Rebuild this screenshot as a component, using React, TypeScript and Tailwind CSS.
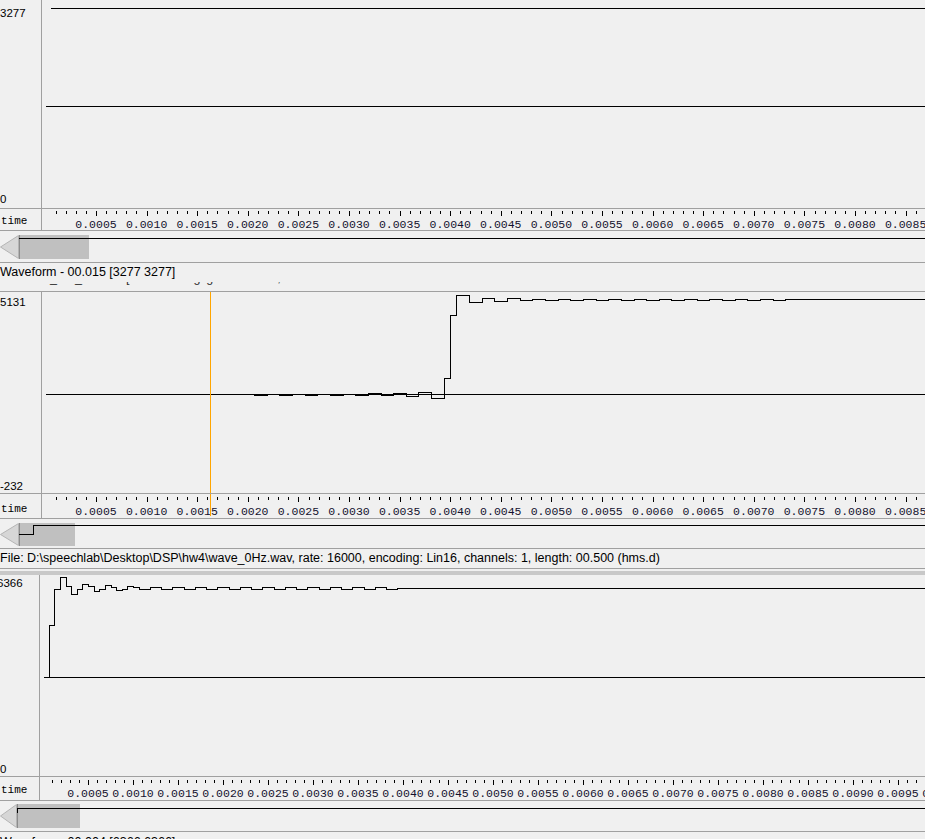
import React from 'react'

const px = (x: number) => Math.round(x) + 0.5

// step-shaped waveform, one level per sample
function stepPath(x0: number, period: number, ys: number[], startY: number, endX = 925) {
  let d = `M${px(x0)} ${startY}`
  ys.forEach((y, i) => {
    d += `V${y}H${px(x0 + (i + 1) * period)}`
  })
  return d + `H${endX}`
}

const wave2: number[] = (() => {
  const s: number[] = []
  const pre = [395.5, 394.5, 395.5, 394.5, 395.5, 394.5, 395.5, 394.5, 395.5, 393.5, 395.5, 393.5, 396.5, 392.5, 398.5]
  pre.forEach((y) => s.push(y, y))
  s.push(378.5, 315.5)
  ;[295.5, 302.5, 298.5, 301.5, 298.5].forEach((y) => s.push(y, y))
  let k = 0
  while (s.length < 86) {
    const y = k % 2 === 0 ? 300.5 : 299.5
    s.push(y, y)
    k++
  }
  s.push(299.5)
  return s
})()

const wave3: number[] = (() => {
  const s = [625.5, 589.5, 577.5, 586.5, 594.5, 589.5, 584.5, 586.5, 591.5, 589.5, 585.5, 587.5, 590.5, 589.5, 586.5, 587.5]
  let k = 0
  while (s.length < 62) {
    const y = k % 2 === 0 ? 589.5 : 587.5
    s.push(y, y)
    k++
  }
  s.push(588.5)
  return s
})()

type WaveProps = {
  h: number
  colW: number
  y0: number
  top: string
  bottom: string
  topPad: number
  bottomPad: number
  topShift?: number
  children: React.ReactNode
}

const WaveRow = ({ h, colW, y0, top, bottom, topPad, bottomPad, topShift = 0, children }: WaveProps) => {
  const inner = h - 1
  return (
    <div className="flex border-b border-[#a0a0a0]" style={{ height: h }}>
      <div
        className="flex shrink-0 flex-col justify-between overflow-hidden border-r border-[#a0a0a0] text-[11.5px] leading-[13px]"
        style={{ width: colW, paddingTop: topPad, paddingBottom: bottomPad }}
      >
        <span className="whitespace-nowrap" style={{ marginLeft: topShift }}>
          {top}
        </span>
        <span className="whitespace-nowrap">{bottom}</span>
      </div>
      <svg
        width={925 - colW}
        height={inner}
        viewBox={`${colW} ${y0} ${925 - colW} ${inner}`}
        className="block shrink-0"
        fill="none"
        stroke="#000"
        strokeWidth={1}
        shapeRendering="crispEdges"
      >
        {children}
      </svg>
    </div>
  )
}

type RulerProps = {
  h: number
  colW: number
  t0: number
  step: number
  tickTop: number
  labelTop: number
  timeTop: number
  cursorX?: number
}

const Ruler = ({ h, colW, t0, step, tickTop, labelTop, timeTop, cursorX }: RulerProps) => {
  const ticks: { x: number; major: boolean }[] = []
  for (let i = 1; t0 + i * step < 925; i++) ticks.push({ x: t0 + i * step, major: i % 5 === 0 })
  const labels: { x: number; text: string }[] = []
  for (let i = 5; t0 + i * step - 25 < 925; i += 5) labels.push({ x: t0 + i * step, text: (i / 10000).toFixed(4) })
  return (
    <div className="flex border-b border-[#a0a0a0]" style={{ height: h }}>
      <div
        className="shrink-0 border-r border-[#a0a0a0] pl-[1px] font-mono text-[11px] leading-[13px]"
        style={{ width: colW, paddingTop: timeTop }}
      >
        time
      </div>
      <div className="relative flex-1 overflow-hidden">
        <svg width={925 - colW} height={h - 1} viewBox={`${colW} 0 ${925 - colW} ${h - 1}`} className="block">
          {ticks.map((t) => (
            <rect key={t.x} x={Math.round(t.x)} y={tickTop} width={1} height={t.major ? 5 : 3} fill="#000" />
          ))}
        </svg>
        {labels.map((l) => (
          <span
            key={l.text}
            className="absolute -translate-x-1/2 whitespace-nowrap font-mono text-[11.5px] leading-[13px] text-[#14122e]"
            style={{ left: l.x - colW, top: labelTop }}
          >
            {l.text}
          </span>
        ))}
        {cursorX !== undefined && (
          <div className="absolute top-0 h-[22px] w-px bg-[#ffa500]" style={{ left: cursorX - colW }} />
        )}
      </div>
    </div>
  )
}

type ScrollProps = {
  h: number
  y0: number
  arrowW: number
  thumbW: number
  thumbTop: number
  thumbH: number
  mini: string
}

const Scroll = ({ h, y0, arrowW, thumbW, thumbTop, thumbH, mini }: ScrollProps) => (
  <div className="relative flex items-start border-b border-[#a0a0a0]" style={{ height: h, paddingTop: thumbTop }}>
    <svg width={arrowW} height={thumbH} className="block shrink-0">
      <polygon
        points={`${arrowW - 0.5},0.5 ${arrowW - 0.5},${thumbH - 0.5} 0.5,${thumbH / 2}`}
        fill="#d6d6d6"
        stroke="#b4b4b4"
      />
    </svg>
    <div className="shrink-0 border-l border-[#8c8c8c] bg-[#c0c0c0]" style={{ width: thumbW, height: thumbH }} />
    <svg
      width={925}
      height={h - 1}
      viewBox={`0 ${y0} 925 ${h - 1}`}
      className="pointer-events-none absolute left-0 top-0"
      fill="none"
      stroke="#000"
      shapeRendering="crispEdges"
    >
      <path d={mini} />
    </svg>
  </div>
)

export default function App() {
  return (
    <div className="h-[839px] w-[925px] overflow-hidden bg-[#f0f0f0] font-['Liberation_Sans',Arial,sans-serif] text-black">
      {/* upper pane */}
      <WaveRow h={209} colW={42} y0={0} top="3277" bottom="0" topPad={7} bottomPad={2}>
        <path d="M51 8.5H925" />
        <path d="M46 106.5H925" />
      </WaveRow>
      <Ruler h={22} colW={42} t0={45.4} step={10.12} tickTop={2} labelTop={9} timeTop={6} />
      <Scroll h={32} y0={231} arrowW={19} thumbW={70} thumbTop={4} thumbH={24} mini="M19 238.5H925" />
      <div className="h-[19px] whitespace-nowrap text-[12.5px] leading-[19px]">Waveform - 00.015 [3277 3277]</div>
      {/* label of the pane behind, mostly hidden */}
      <div className="h-[10px] overflow-hidden border-b border-[#a0a0a0]">
        <div className="-mt-[13px] flex whitespace-nowrap pl-[50px] text-[12.5px] leading-[19px] text-[#303030]">
          <span>_</span>
          <span className="ml-[18px]">_</span>
          <span className="ml-[44px]">[</span>
          <span className="ml-[64px]">g</span>
          <span className="ml-[6px]">g</span>
          <span className="ml-[64px]">,</span>
        </div>
      </div>

      {/* middle pane */}
      <WaveRow h={202} colW={42} y0={292} top="5131" bottom="-232" topPad={4} bottomPad={0}>
        <path d="M46 394.5H925" />
        <path d={stepPath(254, 6.325, wave2, 394.5)} />
        <path d="M210.5 292V493" stroke="#ffa500" />
      </WaveRow>
      <Ruler h={25} colW={42} t0={45.4} step={10.12} tickTop={3} labelTop={11} timeTop={9} cursorX={210} />
      <Scroll
        h={30}
        y0={519}
        arrowW={19}
        thumbW={56}
        thumbTop={4}
        thumbH={23}
        mini="M19 534.5H33.5V525.5H925"
      />
      <div className="h-[20px] whitespace-nowrap border-b border-[#a0a0a0] text-[12.5px] leading-[19px]">
        File: D:\speechlab\Desktop\DSP\hw4\wave_0Hz.wav, rate: 16000, encoding: Lin16, channels: 1, length: 00.500 (hms.d)
      </div>
      <div className="h-[2px]" />
      <div className="h-[4px] bg-[#c8c8c8]" />

      {/* lower pane */}
      <WaveRow h={202} colW={40} y0={575} top="6366" bottom="0" topPad={2} bottomPad={0} topShift={-3}>
        <path d="M44 677.5H925" />
        <path d={stepPath(48.7, 5.625, wave3, 677.5)} />
      </WaveRow>
      <Ruler h={24} colW={40} t0={43} step={9} tickTop={3} labelTop={10} timeTop={7} />
      <Scroll h={31} y0={801} arrowW={17} thumbW={63} thumbTop={3} thumbH={24} mini="M17.5 813V808.5H925" />
      <div className="h-[20px] whitespace-nowrap pt-[1px] text-[12.5px] leading-[19px]">Waveform - 00.004 [6366 6366]</div>
    </div>
  )
}
